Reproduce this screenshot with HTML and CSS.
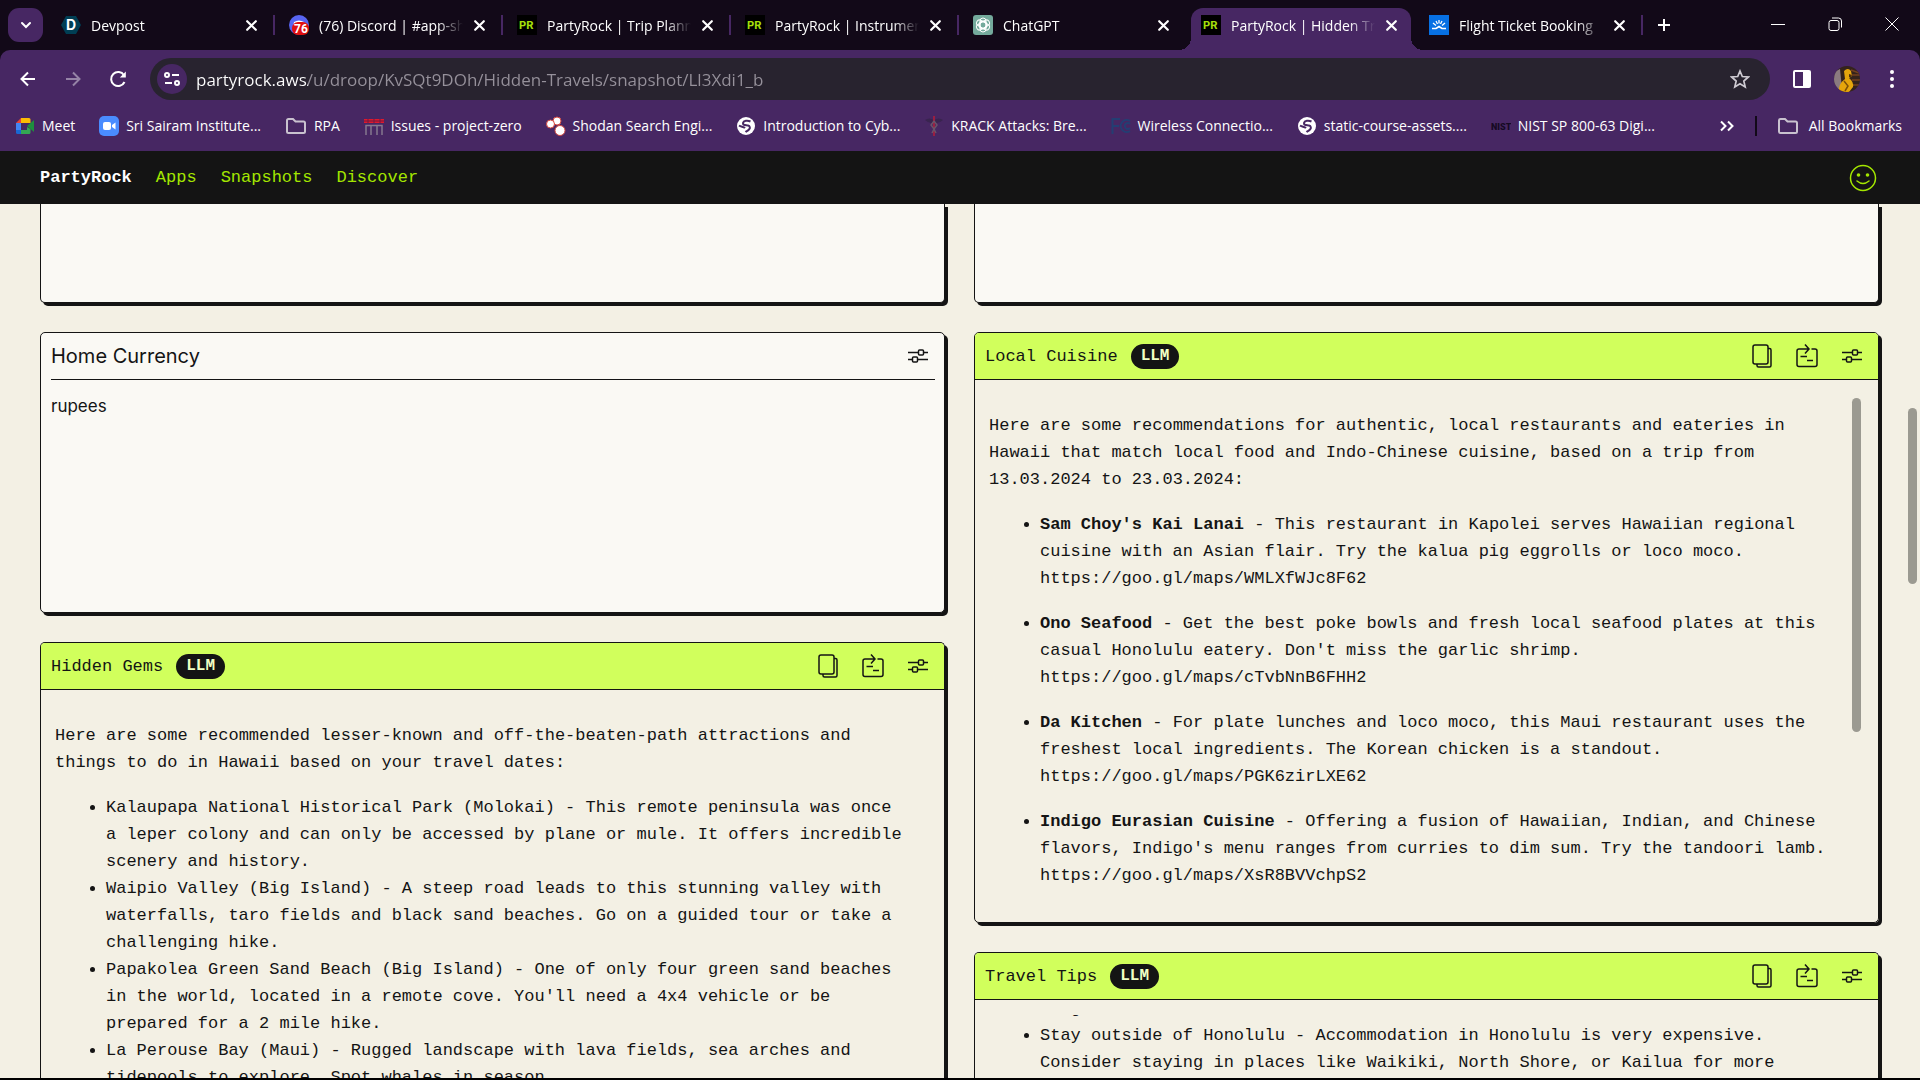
FILE: index.html
```html
<!DOCTYPE html>
<html lang="en">
<head>
  <meta charset="UTF-8" />
  <meta name="viewport" content="width=device-width, initial-scale=1.0"/>
  <title>PartyRock | Hidden Travels</title>
  <link rel="stylesheet" href="styles.css">
</head>
<body>

  <!-- shared icons -->
  <svg class="defs" aria-hidden="true">
    <symbol id="i-close" viewBox="0 0 12 12"><path d="M2 2l8 8M10 2l-8 8" stroke="currentColor" stroke-width="2" stroke-linecap="round"/></symbol>
    <symbol id="i-folder" viewBox="0 0 22 20"><path d="M2 4.500a1.500 1.500 0 0 1 1.500-1.500H8l2.500 2.500H18.500a1.500 1.500 0 0 1 1.500 1.500V15.500a1.500 1.500 0 0 1-1.500 1.500H3.500A1.500 1.500 0 0 1 2 15.500z" fill="none" stroke="#c9c2cf" stroke-width="2"/></symbol>
    <symbol id="i-globe" viewBox="0 0 20 20"><circle cx="10" cy="10" r="9" fill="#fff"/><path d="M14.500 5.500c-3-1.500-7-1-7.500 1.500s3 2 5 2.500 2.500 2.500 1 4-2.500 1.500-3.500 2.500M3 9.500c2 1.500 4.500 1 6 2.500" fill="none" stroke="#472763" stroke-width="2"/></symbol>
    <symbol id="i-copy" viewBox="0 0 20 24"><rect x="1" y="1" width="15" height="19" rx="2"/><path d="M16 4.500h1.500a1.500 1.500 0 0 1 1.500 1.500V21.500a1.500 1.500 0 0 1-1.500 1.500H6.500A1.500 1.500 0 0 1 5 21.500V20"/></symbol>
    <symbol id="i-paste" viewBox="0 0 22 24"><path d="M13 5H3A2 2 0 0 0 1 7V20.500A2 2 0 0 0 3 22.500H19a2 2 0 0 0 2-2V7A2 2 0 0 0 19 5H15.500M9 .5l4 4.500-4 4.500M4.500 12.500H11M11 16.500h6"/></symbol>
    <symbol id="i-sliders" viewBox="0 0 20 14"><path d="M0 3.500H10M16 3.500H20M0 10.500H4M10 10.500H20"/><rect x="10.500" y="1" width="5" height="5" rx="1"/><rect x="4.500" y="8" width="5" height="5" rx="1"/></symbol>
    <symbol id="i-pr" viewBox="0 0 20 20"><rect width="20" height="20" fill="#000"/><text x="2" y="14" font-family="Inter, sans-serif" font-size="11" font-weight="700" fill="#a6e00a">PR</text></symbol>
  </svg>

  <div class="tabstrip">
    <button class="tab-search" aria-label="Search tabs"><svg width="14" height="14" viewBox="0 0 14 14"><path d="M3 5l4 4 4-4" fill="none" stroke="#fff" stroke-width="2" stroke-linecap="round"/></svg></button>
    <div class="tabs">
      <div class="tab"><div class="tab-body">
        <svg class="fav" viewBox="0 0 20 20"><path d="M5 1h10l5 9-5 9H5l-5-9z" fill="#003e54"/><text x="5" y="15" font-family="Inter, sans-serif" font-size="14" font-weight="700" fill="#fff">D</text></svg>
        <span class="tab-title">Devpost</span><button class="tab-close" aria-label="Close"><svg><use href="#i-close"/></svg></button>
      </div></div>
      <div class="tab"><div class="tab-body">
        <svg class="fav" viewBox="0 0 20 20"><circle cx="10" cy="10" r="10" fill="#5865f2"/><path d="M5 7q5-3 10 0l1 5H4z" fill="#fff"/><rect x="3" y="7" width="17" height="13" rx="6" fill="#e01010"/><text x="5" y="18" font-family="Roboto, sans-serif" font-size="12" font-weight="700" fill="#fff">76</text></svg>
        <span class="tab-title">(76) Discord | #app-showcase</span><button class="tab-close" aria-label="Close"><svg><use href="#i-close"/></svg></button>
      </div></div>
      <div class="tab"><div class="tab-body">
        <svg class="fav"><use href="#i-pr"/></svg>
        <span class="tab-title">PartyRock | Trip Planner</span><button class="tab-close" aria-label="Close"><svg><use href="#i-close"/></svg></button>
      </div></div>
      <div class="tab"><div class="tab-body">
        <svg class="fav"><use href="#i-pr"/></svg>
        <span class="tab-title">PartyRock | Instrument</span><button class="tab-close" aria-label="Close"><svg><use href="#i-close"/></svg></button>
      </div></div>
      <div class="tab before-active"><div class="tab-body">
        <svg class="fav" viewBox="0 0 20 20"><rect width="20" height="20" rx="3" fill="#74aa9c"/><g fill="none" stroke="#fff"><rect id="petal" x="7" y="3" width="6" height="11" rx="3"/><use href="#petal" transform="rotate(60 10 10)"/><use href="#petal" transform="rotate(120 10 10)"/><use href="#petal" transform="rotate(180 10 10)"/><use href="#petal" transform="rotate(240 10 10)"/><use href="#petal" transform="rotate(300 10 10)"/></g></svg>
        <span class="tab-title">ChatGPT</span><button class="tab-close" aria-label="Close"><svg><use href="#i-close"/></svg></button>
      </div></div>
      <div class="tab active"><div class="tab-body">
        <svg class="fav"><use href="#i-pr"/></svg>
        <span class="tab-title">PartyRock | Hidden Travels</span><button class="tab-close" aria-label="Close"><svg><use href="#i-close"/></svg></button>
      </div></div>
      <div class="tab"><div class="tab-body">
        <svg class="fav" viewBox="0 0 20 20"><rect width="20" height="20" fill="#0770e3"/><path d="M3 13.500h4l3-2 3 2h4" fill="none" stroke="#fff" stroke-width="1.600"/><path d="M4 8l3 2.500M7 6l1.500 3M10 5v3.500M13 6l-1.500 3M16 8l-3 2.500" stroke="#fff" stroke-width="1.300"/></svg>
        <span class="tab-title">Flight Ticket Booking</span><button class="tab-close" aria-label="Close"><svg><use href="#i-close"/></svg></button>
      </div></div>
    </div>
    <button class="new-tab" aria-label="New tab"><svg width="14" height="14" viewBox="0 0 14 14"><path d="M7 1v12M1 7h12" stroke="#fff" stroke-width="2"/></svg></button>
    <div class="window-buttons">
      <button aria-label="Minimize"><svg width="14" height="14" viewBox="0 0 14 14"><path d="M0 7.500h14" stroke="#fff"/></svg></button>
      <button aria-label="Restore"><svg width="14" height="14" viewBox="0 0 14 14"><rect x="1" y="3.500" width="10" height="10" rx="2" fill="none" stroke="#fff"/><path d="M4 1h6.500a3 3 0 0 1 3 3v6.500" fill="none" stroke="#fff"/></svg></button>
      <button aria-label="Close window"><svg width="14" height="14" viewBox="0 0 14 14"><path d="M.5.5l13 13M13.500.5l-13 13" stroke="#fff"/></svg></button>
    </div>
  </div>

  <div class="browser-bar">
    <div class="toolbar">
      <button class="tool" aria-label="Back"><svg width="20" height="20" viewBox="0 0 20 20"><path d="M17 10H4M10 3.500L3.500 10l6.500 6.500" fill="none" stroke="#fff" stroke-width="2"/></svg></button>
      <button class="tool" aria-label="Forward"><svg width="20" height="20" viewBox="0 0 20 20"><path d="M3 10h13M10 3.500l6.500 6.500-6.500 6.500" fill="none" stroke="#9583a6" stroke-width="2"/></svg></button>
      <button class="tool" aria-label="Reload"><svg width="20" height="20" viewBox="0 0 20 20"><path d="M16.500 13A7 7 0 1 1 16 6.200" fill="none" stroke="#fff" stroke-width="2"/><path d="M17.800 2.500v6h-6z" fill="#fff"/></svg></button>
      <div class="address">
        <button class="site-info" aria-label="Site information"><svg width="18" height="18" viewBox="0 0 18 18"><g fill="none" stroke="#fff" stroke-width="2"><circle cx="4" cy="5" r="2"/><path d="M9 5h7M2 13h7"/><circle cx="14" cy="13" r="2"/></g></svg></button>
        <input class="url" type="text" aria-label="Address" value="partyrock.aws/u/droop/KvSQt9DOh/Hidden-Travels/snapshot/Ll3Xdi1_b">
        <button class="star" aria-label="Bookmark this tab"><svg width="20" height="20" viewBox="0 0 20 20"><path d="M10 2l2.300 5.500 6 .5-4.500 4 1.400 5.900L10 14.800l-5.200 3.100L6.200 12 1.700 8l6-.5z" fill="none" stroke="#cfcbd3" stroke-width="1.700"/></svg></button>
      </div>
      <button class="tool-right" aria-label="Side panel"><svg width="20" height="20" viewBox="0 0 20 20"><rect x="2" y="2" width="16" height="16" rx="1" fill="none" stroke="#fff" stroke-width="2"/><path d="M11 2h7v16h-7z" fill="#fff"/></svg></button>
      <button class="tool-right" aria-label="Profile"><svg width="26" height="26" viewBox="0 0 26 26"><clipPath id="av"><circle cx="13" cy="13" r="13"/></clipPath><g clip-path="url(#av)"><path d="M0 0h26v26H0z" fill="#34231c"/><path d="M0 6l6-3 2 20H0z" fill="#8a7a80"/><path d="M17 4l8 3M18 9h8M18 14h8M19 19h6" stroke="#74401e" stroke-width="1.500"/><path d="M10 5q4-4 7 0l1 5-3 2q5 4 4 9l-4 5H5q-1-8 6-13z" fill="#e5a50c"/><path d="M10 15l4 5-3 5" fill="none" stroke="#7c5008" stroke-width="1.500"/><path d="M15 8l3 1-1 2h-2z" fill="#51300c"/></g></svg></button>
      <button class="tool-right" aria-label="Menu"><svg width="20" height="20" viewBox="0 0 20 20" fill="#fff"><circle cx="10" cy="3" r="2"/><circle cx="10" cy="10" r="2"/><circle cx="10" cy="17" r="2"/></svg></button>
    </div>

    <div class="bookmarks">
      <div class="bookmark-list">
        <a href="#"><svg class="fav" viewBox="0 0 20 20"><path d="M6 2v5H1z" fill="#ea4335"/><path d="M1 7h5v7H1z" fill="#4285f4"/><path d="M1 14h5v4H2.500A1.500 1.500 0 0 1 1 16.500z" fill="#1967d2"/><path d="M6 2h8a1.500 1.500 0 0 1 1.500 1.500V7H6z" fill="#fbbc04"/><path d="M6 14h6v-3l3.500 2v3.500A1.500 1.500 0 0 1 14 18H6z" fill="#34a853"/><path d="M12 10l7-6v12z" fill="#1e8e3e"/></svg>Meet</a>
        <a href="#"><svg class="fav" viewBox="0 0 20 20"><rect width="20" height="20" rx="5" fill="#4a8cff"/><rect x="4" y="6" width="8" height="8" rx="2" fill="#fff"/><path d="M13 9l3.500-2.500v7L13 11z" fill="#fff"/></svg>Sri Sairam Institute...</a>
        <a href="#" class="folder"><svg class="folder-icon"><use href="#i-folder"/></svg>RPA</a>
        <a href="#"><svg class="fav" viewBox="0 0 20 20"><path d="M0 3h20v4H0z" fill="#e0182d"/><path d="M0 5h20M4 3v4M10 3v4M16 3v4" stroke="#6d1a45"/><path d="M2 19V9.500h16V19M7 9.500V19M13 9.500V19" fill="none" stroke="#85788e" stroke-width="1.500"/></svg>Issues - project-zero</a>
        <a href="#"><svg class="fav" viewBox="0 0 20 20" fill="#fff" stroke="#d4483f"><circle cx="11" cy="5" r="4"/><circle cx="4.500" cy="8" r="4"/><circle cx="14" cy="14.500" r="5"/></svg>Shodan Search Engi...</a>
        <a href="#"><svg class="fav"><use href="#i-globe"/></svg>Introduction to Cyb...</a>
        <a href="#"><svg class="fav" viewBox="0 0 20 20"><path d="M1 4q4-3 9 0 5-3 9 0-4 4-9 3-5 1-9-3z" fill="#39244f"/><path d="M10 0v20" stroke="#9a1f42" stroke-width="2"/><path d="M10 5l3 4-3 4 2 4M10 5L7 9l3 4-2 4" fill="none" stroke="#69546a" stroke-width="1.500"/></svg>KRACK Attacks: Bre...</a>
        <a href="#"><svg class="fav" viewBox="0 0 20 20"><g fill="none" stroke="#243e73" stroke-width="2"><path d="M1.500 18V3H9M1.500 10H8"/><path d="M19 5a6 6 0 1 0 0 10M19 8a3 3 0 1 0 0 4"/></g></svg>Wireless Connectio...</a>
        <a href="#"><svg class="fav"><use href="#i-globe"/></svg>static-course-assets....</a>
        <a href="#"><svg class="fav" viewBox="0 0 20 20"><text x="0" y="14" font-family="Roboto, sans-serif" font-size="9" font-weight="900" fill="#160a24">NIST</text></svg>NIST SP 800-63 Digi...</a>
      </div>
      <button class="more" aria-label="More bookmarks"><svg width="16" height="16" viewBox="0 0 16 16"><path d="M2 3.500L6.500 8 2 12.500M9 3.500L13.500 8 9 12.500" fill="none" stroke="#fff" stroke-width="2"/></svg></button>
      <a href="#" class="all-bookmarks"><svg class="folder-icon"><use href="#i-folder"/></svg>All Bookmarks</a>
    </div>
  </div>

  <header class="site-header">
    <nav>
      <a href="#" class="brand">PartyRock</a>
      <a href="#">Apps</a>
      <a href="#">Snapshots</a>
      <a href="#">Discover</a>
    </nav>
    <button class="account" aria-label="Account"><svg width="28" height="28" viewBox="0 0 28 28"><circle cx="14" cy="14" r="12.500" fill="none" stroke="#a3e600" stroke-width="1.500"/><circle cx="9.500" cy="11" r="1.800" fill="#a3e600"/><circle cx="18.500" cy="11" r="1.800" fill="#a3e600"/><path d="M8 17q6 5 12 0" fill="none" stroke="#a3e600" stroke-width="1.500" stroke-linecap="round"/></svg></button>
  </header>

  <main class="page">
    <div class="column">
      <section class="card cut"></section>

      <section class="card input-card">
        <div class="input-head">
          <label for="currency">Home Currency</label>
          <button aria-label="Edit"><svg class="sliders"><use href="#i-sliders"/></svg></button>
        </div>
        <textarea id="currency">rupees</textarea>
      </section>

      <section class="card llm-card last">
        <div class="card-head">
          <h2>Hidden Gems</h2><span class="badge">LLM</span>
          <div class="actions">
            <button aria-label="Copy"><svg class="copy"><use href="#i-copy"/></svg></button>
            <button aria-label="Paste"><svg class="paste"><use href="#i-paste"/></svg></button>
            <button aria-label="Edit"><svg class="sliders"><use href="#i-sliders"/></svg></button>
          </div>
        </div>
        <div class="card-body">
          <p>Here are some recommended lesser-known and off-the-beaten-path attractions and things to do in Hawaii based on your travel dates:</p>
          <ul>
            <li>Kalaupapa National Historical Park (Molokai) - This remote peninsula was once a leper colony and can only be accessed by plane or mule. It offers incredible scenery and history.</li>
            <li>Waipio Valley (Big Island) - A steep road leads to this stunning valley with waterfalls, taro fields and black sand beaches. Go on a guided tour or take a challenging hike.</li>
            <li>Papakolea Green Sand Beach (Big Island) - One of only four green sand beaches in the world, located in a remote cove. You'll need a 4x4 vehicle or be prepared for a 2 mile hike.</li>
            <li>La Perouse Bay (Maui) - Rugged landscape with lava fields, sea arches and tidepools to explore. Spot whales in season.</li>
          </ul>
        </div>
      </section>
    </div>

    <div class="column">
      <section class="card cut"></section>

      <section class="card llm-card">
        <div class="card-head">
          <h2>Local Cuisine</h2><span class="badge">LLM</span>
          <div class="actions">
            <button aria-label="Copy"><svg class="copy"><use href="#i-copy"/></svg></button>
            <button aria-label="Paste"><svg class="paste"><use href="#i-paste"/></svg></button>
            <button aria-label="Edit"><svg class="sliders"><use href="#i-sliders"/></svg></button>
          </div>
        </div>
        <div class="card-body spaced">
          <p>Here are some recommendations for authentic, local restaurants and eateries in Hawaii that match local food and Indo-Chinese cuisine, based on a trip from 13.03.2024 to 23.03.2024:</p>
          <ul>
            <li><b>Sam Choy's Kai Lanai</b> - This restaurant in Kapolei serves Hawaiian regional cuisine with an Asian flair. Try the kalua pig eggrolls or loco moco. https://goo.gl/maps/WMLXfWJc8F62</li>
            <li><b>Ono Seafood</b> - Get the best poke bowls and fresh local seafood plates at this casual Honolulu eatery. Don't miss the garlic shrimp. https://goo.gl/maps/cTvbNnB6FHH2</li>
            <li><b>Da Kitchen</b> - For plate lunches and loco moco, this Maui restaurant uses the freshest local ingredients. The Korean chicken is a standout. https://goo.gl/maps/PGK6zirLXE62</li>
            <li><b>Indigo Eurasian Cuisine</b> - Offering a fusion of Hawaiian, Indian, and Chinese flavors, Indigo's menu ranges from curries to dim sum. Try the tandoori lamb. https://goo.gl/maps/XsR8BVVchpS2</li>
          </ul>
          <div class="card-thumb"></div>
        </div>
      </section>

      <section class="card llm-card last">
        <div class="card-head">
          <h2>Travel Tips</h2><span class="badge">LLM</span>
          <div class="actions">
            <button aria-label="Copy"><svg class="copy"><use href="#i-copy"/></svg></button>
            <button aria-label="Paste"><svg class="paste"><use href="#i-paste"/></svg></button>
            <button aria-label="Edit"><svg class="sliders"><use href="#i-sliders"/></svg></button>
          </div>
        </div>
        <div class="card-body scrolled">
          <div class="scroll-area">
            <ul>
              <li class="tail">bargains.</li>
              <li>Stay outside of Honolulu - Accommodation in Honolulu is very expensive. Consider staying in places like Waikiki, North Shore, or Kailua for more affordable options.</li>
            </ul>
          </div>
        </div>
      </section>
    </div>
    <div class="page-thumb"></div>
  </main>
  <div class="taskbar"></div>

</body>
</html>
```
FILE: styles.css
```css
* { box-sizing: border-box; }
body { margin: 0; height: 100vh; overflow: hidden; display: flex; flex-direction: column; background: #f3f0e4; color: #141414; font-family: "Liberation Mono", monospace; font-size: 17px; }
button { padding: 0; border: none; background: none; color: inherit; cursor: pointer; display: flex; align-items: center; justify-content: center; flex-shrink: 0; }
a { color: inherit; text-decoration: none; }
svg { display: block; flex-shrink: 0; }
.defs { position: absolute; width: 0; height: 0; }
.fav { width: 20px; height: 20px; }

/* browser tabs */
.tabstrip { height: 50px; flex-shrink: 0; display: flex; background: #120918; color: #fff; font-family: "Open Sans", sans-serif; font-size: 14px; }
.tab-search { width: 35px; height: 34px; margin: 8px 4px 8px 8px; border-radius: 11px; background: #472763; }
.tabs { display: flex; flex: 0 1 1596px; min-width: 0; }
.tab { flex: 1; min-width: 0; padding: 8px 4px 0; position: relative; }
.tab::after { content: ""; position: absolute; right: 0; top: 15px; width: 2px; height: 20px; background: #472763; }
.tab.active::after, .tab.before-active::after { display: none; }
.tab-body { height: 42px; display: flex; align-items: center; gap: 10px; padding: 0 13px 8px 10px; position: relative; }
.active .tab-body { background: #472763; border-radius: 12px 12px 0 0; }
.active .tab-body::before, .active .tab-body::after { content: ""; position: absolute; bottom: 0; width: 12px; height: 12px; }
.active .tab-body::before { left: -12px; background: radial-gradient(circle at 0 0, #120918 12px, #472763 12px); }
.active .tab-body::after { right: -12px; background: radial-gradient(circle at 100% 0, #120918 12px, #472763 12px); }
.tab-title { flex: 1; min-width: 0; overflow: hidden; white-space: nowrap; -webkit-mask-image: linear-gradient(to right, #000 82%, transparent); mask-image: linear-gradient(to right, #000 82%, transparent); }
.tab-close svg { width: 13px; height: 13px; }
.new-tab { width: 42px; }
.window-buttons { display: flex; margin-left: auto; }
.window-buttons button { width: 57px; padding-bottom: 2px; }

/* toolbar and bookmarks */
.browser-bar { flex-shrink: 0; background: #472763; color: #fff; font-family: "Open Sans", sans-serif; border-radius: 10px 10px 0 0; box-shadow: 0 -10px 0 0 #120918; position: relative; z-index: -1; }
.toolbar { display: flex; align-items: center; padding: 8px 6px 0 5px; }
.tool { width: 45px; height: 42px; }
.address { flex: 1; height: 42px; margin: 0 9px 0 10px; padding: 0 20px 0 7px; border-radius: 21px; background: #28232f; display: flex; align-items: center; }
.site-info { width: 30px; height: 30px; border-radius: 15px; background: #472763; }
.url { flex: 1; min-width: 0; border: none; outline: none; padding: 0; margin-left: 9px; font-family: inherit; font-size: 17px; background: linear-gradient(to right, #fff 112px, #96919b 112px); -webkit-background-clip: text; background-clip: text; color: transparent; }
.tool-right { width: 45px; height: 42px; }
.bookmarks { display: flex; align-items: center; height: 51px; padding: 0 18px 0 15px; font-size: 14px; white-space: nowrap; }
.bookmarks a { display: flex; align-items: center; gap: 7px; }
.bookmark-list { display: flex; flex: 0 1 1640px; justify-content: space-between; min-width: 0; }
.folder-icon { width: 22px; height: 20px; }
.more { margin: 0 20px 0 auto; }
.bookmarks .all-bookmarks { gap: 10px; border-left: 2px solid #120918; padding-left: 20px; }

/* site header */
.site-header { flex-shrink: 0; height: 53px; padding: 0 43px 0 40px; background: #141414; display: flex; align-items: center; justify-content: space-between; }
.site-header nav { display: flex; gap: 24px; color: #a3e600; }
.site-header .brand { color: #fff; font-weight: bold; }

/* cards */
.page { flex: 1; min-height: 0; overflow: hidden; position: relative; display: grid; grid-template-columns: 1fr 1fr; gap: 29px; padding: 0 41px 0 40px; }
.column { display: flex; flex-direction: column; gap: 29px; min-width: 0; min-height: 0; }
.card { flex-shrink: 0; border: 1px solid #141414; border-radius: 5px; box-shadow: 3px 3px 0 #141414; }
.cut { height: 99px; border-top: none; border-radius: 0 0 5px 5px; background: #faf9f4; }
.input-card { height: 281px; padding: 0 9px 10px 10px; background: #faf9f4; font-family: Inter, sans-serif; display: flex; flex-direction: column; }
.input-head { height: 47px; padding-right: 7px; display: flex; align-items: center; justify-content: space-between; border-bottom: 1px solid #141414; font-size: 20px; }
.input-card textarea { flex: 1; border: none; outline: none; resize: none; padding: 13px 0; background: none; color: inherit; font-family: inherit; font-size: 17px; line-height: 27px; }
.card-head { height: 47px; padding: 0 16px 0 10px; display: flex; align-items: center; gap: 13px; background: #d1ff5c; border-bottom: 1px solid #141414; border-radius: 4px 4px 0 0; }
.card-head h2 { margin: 0; font-size: 17px; font-weight: normal; }
.badge { height: 25px; padding: 0 10px; border-radius: 13px; background: #141414; color: #f0ffc4; font-size: 16px; font-weight: bold; line-height: 25px; }
.actions { margin-left: auto; display: flex; align-items: center; gap: 24px; }
.copy, .paste, .sliders { fill: none; stroke: #141414; stroke-width: 1.5; }
.copy { width: 20px; height: 24px; }
.paste { width: 22px; height: 24px; }
.sliders { width: 20px; height: 14px; }
.card-body { position: relative; padding: 32px 38px 33px 14px; line-height: 27px; }
.card-body p { margin: 0 0 18px; }
.card-body ul { margin: 0; padding-left: 51px; }
.spaced li + li { margin-top: 18px; }
.last { flex: 1 0 auto; border-bottom: none; }
.scrolled { padding-top: 15px; }
.scroll-area { overflow: hidden; }
.scroll-area ul { margin-top: -20px; }
.tail { list-style: none; }
.card-thumb { position: absolute; top: 18px; right: 17px; width: 9px; height: 334px; border-radius: 5px; background: #9b9a91; }
.page-thumb { position: absolute; top: 204px; right: 3px; width: 9px; height: 176px; border-radius: 5px; background: #9b9a91; }
.taskbar { flex-shrink: 0; height: 2px; background: #000; }
```
